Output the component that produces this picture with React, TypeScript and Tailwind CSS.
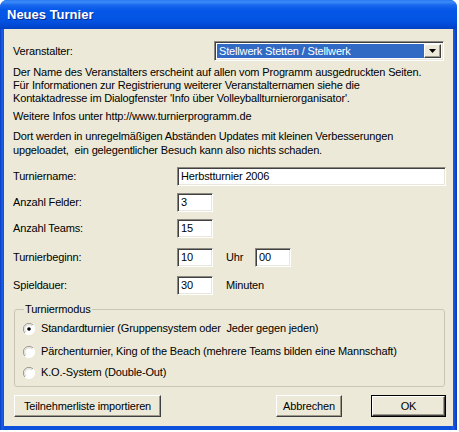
import React from "react";

const font = { fontFamily: '"Liberation Sans", Arial, sans-serif' };

function Radio({ checked }: { checked?: boolean }) {
  return (
    <svg width="12" height="12" viewBox="0 0 12 12" className="shrink-0">
      <circle cx="6" cy="6" r="5.5" fill="#ffffff" />
      <path d="M10 2 A5.5 5.5 0 0 0 2 10" fill="none" stroke="#9a9890" strokeWidth="1" />
      <path d="M9 3 A4.2 4.2 0 0 0 3 9" fill="none" stroke="#d5d3c8" strokeWidth="1" />
      <path d="M2 10 A5.5 5.5 0 0 0 10 2" fill="none" stroke="#ffffff" strokeWidth="1" />
      {checked && <circle cx="6" cy="6" r="1.8" fill="#000" />}
    </svg>
  );
}

function Input({ value, w }: { value: string; w: string }) {
  return (
    <div
      className={`${w} h-[19px] bg-white border-t border-l border-[#8a887f] border-r border-b border-r-white border-b-white shadow-[inset_1px_1px_0_#404040,inset_-1px_-1px_0_#e8e6dc] pl-[3px] flex items-center text-[11px] text-black`}
    >
      {value}
    </div>
  );
}

function Button({ label, w, def }: { label: string; w: string; def?: boolean }) {
  return (
    <div className={`${w} h-[22px] ${def ? "border border-black" : ""} flex`}>
      <div className="flex-1 flex items-center justify-center bg-[#ECE9D8] border-t border-l border-white border-r border-b border-r-[#404040] border-b-[#404040] shadow-[inset_-1px_-1px_0_#9d9a8c] text-[11px] text-black">
        {label}
      </div>
    </div>
  );
}

function Row({ label, children }: { label: string; children: React.ReactNode }) {
  return (
    <div className="flex items-center h-[19px]">
      <div className="w-[164px] shrink-0">{label}</div>
      {children}
    </div>
  );
}

export default function App() {
  return (
    <div className="w-[459px] h-[432px] bg-white" style={font}>
      <div className="w-[457px] h-[430px] flex flex-col rounded-t-[7px] bg-[linear-gradient(to_right,#0a3bbf_0px,#1a5fe6_2px,#0c50dc_4px,#0c50dc_451px,#1a5fe6_453px,#0a3bbf_457px)] px-[4px] pb-[4px]">
        <div className="-mx-[4px] h-[29px] shrink-0 rounded-t-[7px] bg-[linear-gradient(to_bottom,#2a78f0_0px,#3c8cf8_2px,#1a68ee_5px,#0558e8_10px,#0454e2_20px,#0148d2_26px,#0140c2_29px)] flex items-center pl-[7px]">
          <span className="text-white font-bold text-[13px] leading-none [text-shadow:1px_1px_0_#0a2a8a]">
            Neues Turnier
          </span>
        </div>
        <div className="flex-1 bg-[#ECE9D8] text-[11px] leading-[13px] tracking-[-0.16px] text-black pl-[9px] pt-[12px] flex flex-col">
          <div className="flex items-center h-[20px]">
            <div className="w-[201px] shrink-0">Veranstalter:</div>
            <div className="w-[230px] h-[20px] bg-white border-t border-l border-[#8a887f] border-r border-b border-r-white border-b-white shadow-[inset_1px_1px_0_#404040,inset_-1px_-1px_0_#e8e6dc] flex items-center p-[2px]">
              <div className="flex-1 h-full bg-[#316AC5] text-white flex items-center pl-[2px]">
                Stellwerk Stetten / Stellwerk
              </div>
              <div className="w-[17px] h-full flex items-center justify-center bg-[#ECE9D8] border-t border-l border-white border-r border-b border-r-[#404040] border-b-[#404040] shadow-[inset_-1px_-1px_0_#9d9a8c]">
                <svg width="7" height="4" viewBox="0 0 7 4">
                  <path d="M0 0 H7 L3.5 4 Z" fill="#000" />
                </svg>
              </div>
            </div>
          </div>
          <p className="mt-[5px]">
            Der Name des Veranstalters erscheint auf allen vom Programm ausgedruckten Seiten.
            <br />
            Für Informationen zur Registrierung weiterer Veranstalternamen siehe die
            <br />
            Kontaktadresse im Dialogfenster 'Info über Volleyballturnierorganisator'.
          </p>
          <p className="mt-[5px]">Weitere Infos unter http://www.turnierprogramm.de</p>
          <p className="mt-[6px] leading-[14px]">
            Dort werden in unregelmäßigen Abständen Updates mit kleinen Verbesserungen
            <br />
            upgeloadet,&nbsp; ein gelegentlicher Besuch kann also nichts schaden.
          </p>
          <div className="mt-[10px] flex flex-col">
            <Row label="Turniername:">
              <Input value="Herbstturnier 2006" w="w-[269px]" />
            </Row>
            <div className="mt-[7px]">
              <Row label="Anzahl Felder:">
                <Input value="3" w="w-[36px]" />
              </Row>
            </div>
            <div className="mt-[7px]">
              <Row label="Anzahl Teams:">
                <Input value="15" w="w-[36px]" />
              </Row>
            </div>
            <div className="mt-[10px]">
              <Row label="Turnierbeginn:">
                <Input value="10" w="w-[36px]" />
                <span className="ml-[13px] w-[29px]">Uhr</span>
                <Input value="00" w="w-[36px]" />
              </Row>
            </div>
            <div className="mt-[9px]">
              <Row label="Spieldauer:">
                <Input value="30" w="w-[36px]" />
                <span className="ml-[13px]">Minuten</span>
              </Row>
            </div>
          </div>
          <fieldset className="mt-[8px] ml-[1px] w-[431px] h-[84px] border border-[#c8c5b5] rounded-[3px] pl-[8px] pr-0 pt-0 pb-0">
            <legend className="ml-[1px] px-[1px] leading-[13px]">Turniermodus</legend>
            <div className="flex items-center h-[13px] mt-[6px]">
              <Radio checked />
              <span className="ml-[6px]">Standardturnier (Gruppensystem oder&nbsp; Jeder gegen jeden)</span>
            </div>
            <div className="flex items-center h-[13px] mt-[10px]">
              <Radio />
              <span className="ml-[6px]">Pärchenturnier, King of the Beach (mehrere Teams bilden eine Mannschaft)</span>
            </div>
            <div className="flex items-center h-[13px] mt-[8px]">
              <Radio />
              <span className="ml-[6px]">K.O.-System (Double-Out)</span>
            </div>
          </fieldset>
          <div className="mt-[8px] ml-[1px] flex items-center">
            <Button label="Teilnehmerliste importieren" w="w-[147px]" />
            <div className="ml-[115px]">
              <Button label="Abbrechen" w="w-[66px]" />
            </div>
            <div className="ml-[29px]">
              <Button label="OK" w="w-[75px]" def />
            </div>
          </div>
        </div>
      </div>
    </div>
  );
}
